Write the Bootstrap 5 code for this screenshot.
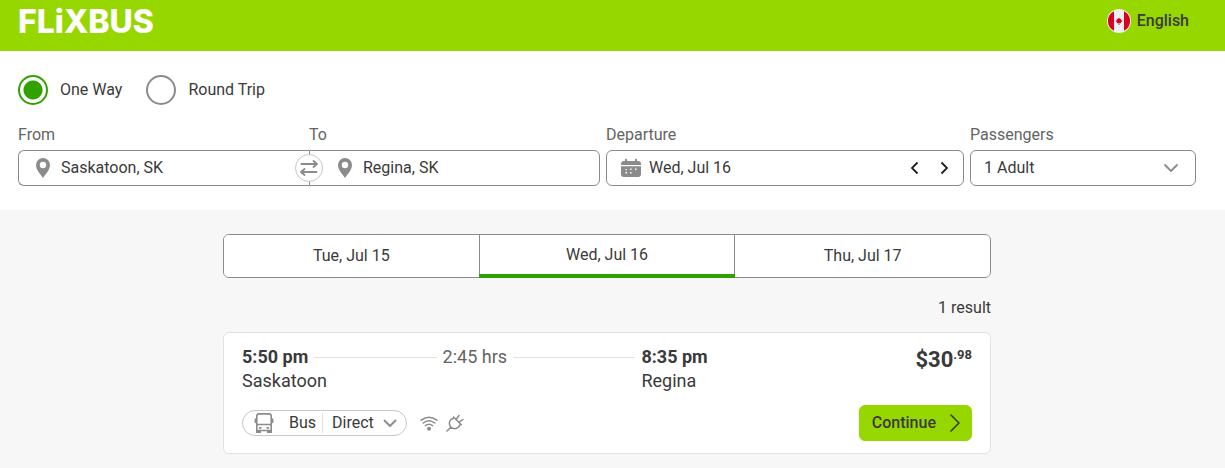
<!DOCTYPE html>
<html lang="en">
<head>
<meta charset="utf-8">
<meta name="viewport" content="width=device-width, initial-scale=1">
<title>FlixBus – Saskatoon to Regina</title>
<link href="https://cdn.jsdelivr.net/npm/bootstrap@5.3.0/dist/css/bootstrap.min.css" rel="stylesheet">
<style>
  :root { --green: #97d700; --green-dark: #31a100; --ink: #3a3a3a; --muted: #646464; --line: #8b8b8b; --soft: #e1e1e1; }
  body { font-family: Roboto, "Liberation Sans", sans-serif; font-size: 16px; line-height: 24px; color: var(--ink); background: #f7f7f7; }
  svg { display: block; flex: none; }
  button, input, select { font: inherit; color: inherit; }

  .site-header { background: var(--green); padding: 4px 36px 11px 18px; }
  .brand { font: 800 32px/36px Inter, "Liberation Sans", sans-serif; color: #fff; text-decoration: none; }
  .plain { border: 0; background: none; padding: 0; color: inherit; }
  .lang { gap: 6px; font-weight: 500; margin-top: -2px; }

  .search { background: #fff; padding: 24px 29px 24px 18px; }
  .trip { gap: 24px; margin-bottom: 18px; }
  .trip .form-check { gap: 12px; min-height: 30px; }
  .trip .form-check-input { width: 30px; height: 30px; margin: 0; float: none; border: 2px solid var(--line); box-shadow: none; }
  .trip .form-check-input:checked { border-color: var(--green-dark); background: radial-gradient(circle, var(--green-dark) 9px, #fff 10px); }
  .fields { display: grid; grid-template-columns: 582fr 358fr 226fr; gap: 6px; }
  .fields label { color: var(--muted); margin-bottom: 3px; display: block; }
  .box { height: 36px; border: 1px solid var(--line); border-radius: 6px; background: #fff; padding: 0 14px; gap: 8px; }
  .box input { border: 0; padding: 0 0 2px; min-width: 0; background: none; outline: 0; height: 32px; }
  .from-box { border-radius: 6px 0 0 6px; border-right: 0; }
  .to-box { border-radius: 0 6px 6px 0; padding-left: 25px; }
  .swap { position: absolute; left: 50%; bottom: 4px; width: 28px; height: 28px; margin-left: -14px; border: 1px solid #c8c8c8; border-radius: 50%; background: #fff; padding: 0; }
  .date-box { padding-right: 12px; }
  .fields .form-select { height: 36px; padding: 0 36px 0 13px; border: 1px solid var(--line); border-radius: 6px; line-height: 24px; color: inherit; background: #fff url("data:image/svg+xml,%3Csvg xmlns='http://www.w3.org/2000/svg' width='16' height='16' fill='none' stroke='%238b8b8b' stroke-width='1.8' stroke-linecap='round' stroke-linejoin='round'%3E%3Cpath d='M2 5l6 6 6-6'/%3E%3C/svg%3E") no-repeat right 16px center / 16px 16px; }

  .page-body { padding: 24px 29px 14px 18px; }
  .results { max-width: 768px; }
  .days { height: 44px; border: 1px solid var(--line); border-radius: 6px; overflow: hidden; margin-bottom: 18px; }
  .days button { flex: 1 1 0; border: 0; background: #fff; padding: 0; }
  .days button + button { border-left: 1px solid var(--line); }
  .days button[aria-current] { padding-bottom: 2px; }
  .day-mark { position: absolute; bottom: 0; left: 33.333%; width: 33.333%; height: 4px; background: var(--green-dark); }
  .count { margin-bottom: 12px; }
  .ride { border: 1px solid var(--soft); border-radius: 6px; background: #fff; padding: 12px 18px; }
  .route { display: grid; grid-template-columns: auto 1fr auto 1fr auto; column-gap: 6px; font-size: 18px; padding-right: 21px; align-items: center; }
  .route .rule { height: 1px; background: var(--soft); }
  .route .length { color: var(--muted); }
  .route .origin { grid-column: 1 / 5; }
  .price { font-size: 22px; font-weight: 700; line-height: 30px; }
  .price sup { font-size: 13px; top: -8px; line-height: 0; vertical-align: baseline; }
  .ride-foot { margin-top: 12px; gap: 8px; }
  .pill { height: 26px; border: 1px solid #c8c8c8; border-radius: 13px; background: #fff; padding: 0 8px 0 11px; margin-right: 5px; }
  .pill .mode { margin-left: 15px; }
  .pill .split { width: 1px; height: 20px; background: var(--soft); margin: 0 9px 0 6px; }
  .go { --bs-btn-bg: var(--green); --bs-btn-border-color: var(--green); --bs-btn-hover-bg: #84bd00; --bs-btn-color: var(--ink); height: 36px; border-radius: 6px; padding: 0 7px 0 12px; font-weight: 500; gap: 10px; }
</style>
</head>
<body>
<header class="site-header d-flex justify-content-between align-items-center">
  <a class="brand" href="#">FLiXBUS</a>
  <button type="button" class="plain lang d-flex align-items-center">
    <svg width="24" height="24" viewBox="0 0 24 24"><circle cx="12" cy="12" r="12" fill="#f0f0f0"/><path d="M7 2.300a10.800 10.800 0 0 0 0 19.400zM17 2.300a10.800 10.800 0 0 1 0 19.400z" fill="#d80027"/><path d="M12 8.500l1 1.600 1.200-.4-.3 1.500 1.700.5-1.700 1.700.2.800-1.700-.2V16h-.8v-2l-1.700.2.2-.8-1.700-1.700 1.700-.5-.3-1.500 1.200.4z" fill="#d80027"/></svg>
    English
  </button>
</header>

<form class="search">
  <div class="trip d-flex">
    <div class="form-check d-flex align-items-center p-0 m-0">
      <input class="form-check-input" type="radio" name="trip" id="oneway" checked>
      <label for="oneway">One Way</label>
    </div>
    <div class="form-check d-flex align-items-center p-0 m-0">
      <input class="form-check-input" type="radio" name="trip" id="round">
      <label for="round">Round Trip</label>
    </div>
  </div>
  <div class="fields">
    <div class="d-flex position-relative">
      <div class="w-50">
        <label for="from">From</label>
        <div class="box from-box d-flex align-items-center">
          <svg width="20" height="20" viewBox="0 0 20 20"><path fill="#8b8b8b" fill-rule="evenodd" d="M10 0a7 7 0 0 0-7 7c0 5 4.500 9 7 13 2.500-4 7-8 7-13a7 7 0 0 0-7-7zm0 3.800a3.200 3.200 0 1 1 0 6.400 3.200 3.200 0 0 1 0-6.400z"/></svg>
          <input class="flex-grow-1" id="from" type="text" value="Saskatoon, SK">
        </div>
      </div>
      <div class="w-50">
        <label for="to">To</label>
        <div class="box to-box d-flex align-items-center">
          <svg width="20" height="20" viewBox="0 0 20 20"><path fill="#8b8b8b" fill-rule="evenodd" d="M10 0a7 7 0 0 0-7 7c0 5 4.500 9 7 13 2.500-4 7-8 7-13a7 7 0 0 0-7-7zm0 3.800a3.200 3.200 0 1 1 0 6.400 3.200 3.200 0 0 1 0-6.400z"/></svg>
          <input class="flex-grow-1" id="to" type="text" value="Regina, SK">
        </div>
      </div>
      <button type="button" class="swap d-flex align-items-center justify-content-center" aria-label="Swap">
        <svg width="18" height="18" viewBox="0 0 18 18" fill="none" stroke="#8b8b8b" stroke-width="1.800" stroke-linecap="round" stroke-linejoin="round"><path d="M1.500 5H17M13.500 2L17 5l-3.500 3M16.500 13H1M4.500 10L1 13l3.500 3"/></svg>
      </button>
    </div>
    <div>
      <label for="date">Departure</label>
      <div class="box date-box d-flex align-items-center">
        <svg width="20" height="20" viewBox="0 0 20 20"><path fill="#8b8b8b" d="M4 3V1.800a1 1 0 0 1 2 0V3h8V1.800a1 1 0 0 1 2 0V3h1a3 3 0 0 1 3 3v1H0V6a3 3 0 0 1 3-3zM0 8.300h20V16a3 3 0 0 1-3 3H3a3 3 0 0 1-3-3z"/><path fill="#fff" d="M9 10.500h1.500V12H9zM14 10.500h1.500V12H14zM4.500 11H6v1.200H4.500zM4.500 14H6v1.500H4.500zM9 14h1.500v1.500H9z"/></svg>
        <input class="flex-grow-1" id="date" type="text" value="Wed, Jul 16">
        <button type="button" class="plain" aria-label="Previous day"><svg width="22" height="16" viewBox="0 0 22 16" fill="none" stroke="#1f1f1f" stroke-width="1.800"><path d="M14.500 2.500L9 8l5.500 5.500"/></svg></button>
        <button type="button" class="plain" aria-label="Next day"><svg width="18" height="16" viewBox="0 0 18 16" fill="none" stroke="#1f1f1f" stroke-width="1.800"><path d="M8.500 2.500L14 8l-5.500 5.500"/></svg></button>
      </div>
    </div>
    <div>
      <label for="pax">Passengers</label>
      <select class="form-select" id="pax"><option>1 Adult</option><option>2 Adults</option></select>
    </div>
  </div>
</form>

<main class="page-body">
  <div class="results mx-auto">
    <div class="position-relative">
      <div class="days d-flex">
        <button type="button">Tue, Jul 15</button>
        <button type="button" aria-current="date">Wed, Jul 16</button>
        <button type="button">Thu, Jul 17</button>
      </div>
      <div class="day-mark"></div>
    </div>
    <p class="count text-end">1 result</p>
    <article class="ride">
      <div class="row g-0">
        <div class="col-8 route">
          <strong>5:50 pm</strong><span class="rule"></span><span class="length">2:45 hrs</span><span class="rule"></span><strong>8:35 pm</strong>
          <span class="origin">Saskatoon</span><span>Regina</span>
        </div>
        <div class="col-4 price text-end">$30<sup>.98</sup></div>
      </div>
      <div class="ride-foot d-flex align-items-center">
        <button type="button" class="pill d-flex align-items-center">
          <svg width="20" height="20" viewBox="0 0 20 20" fill="none" stroke="#8b8b8b" stroke-width="1.600"><path d="M2.800 17.500V3Q2.800 .900 5 .900h10q2.200 0 2.200 2.100v14.500zM2.800 11.500h14.400M1.400 5.500v4.500M18.600 5.500v4.500"/><path fill="#8b8b8b" stroke="none" d="M2 17h5v3H2zM13 17h5v3h-5zM5 14h2.500v1.800H5zM12.500 14H15v1.800h-2.500z"/></svg>
          <span class="mode">Bus</span><span class="split"></span><span>Direct</span>
          <svg class="ms-2" width="16" height="16" viewBox="0 0 16 16" fill="none" stroke="#8b8b8b" stroke-width="1.800" stroke-linecap="round" stroke-linejoin="round"><path d="M2.500 5.500L8 11l5.500-5.500"/></svg>
        </button>
        <svg width="18" height="18" viewBox="0 0 18 18" fill="none" stroke="#8b8b8b" stroke-width="1.500" stroke-linecap="round"><path d="M1.200 6.200Q9 .200 16.800 6.200M3.200 9Q9 4.300 14.800 9M5.500 11.600Q9 8.800 12.500 11.600"/><circle cx="9" cy="14.800" r="2" fill="#8b8b8b" stroke="none"/></svg>
        <svg width="18" height="18" viewBox="0 0 18 18" fill="none" stroke="#8b8b8b" stroke-width="1.500" stroke-linecap="round" stroke-linejoin="round"><path d="M1 17l3.800-3.800M7.500 3l7.800 7.800M8.300 3.800L5 5.500Q1.800 9 4.800 13.200 9 16.200 12.500 13L14.500 10M10.300 5.200L13 1.500M13.200 8.200l3.800-2.700"/></svg>
        <button type="button" class="btn go d-flex align-items-center ms-auto">Continue
          <svg width="18" height="18" viewBox="0 0 18 18" fill="none" stroke="#3a3a3a" stroke-width="1.600" stroke-linecap="round" stroke-linejoin="round"><path d="M5 1l8 8-8 8"/></svg>
        </button>
      </div>
    </article>
  </div>
</main>
<script src="https://cdn.jsdelivr.net/npm/bootstrap@5.3.0/dist/js/bootstrap.bundle.min.js"></script>
</body>
</html>
